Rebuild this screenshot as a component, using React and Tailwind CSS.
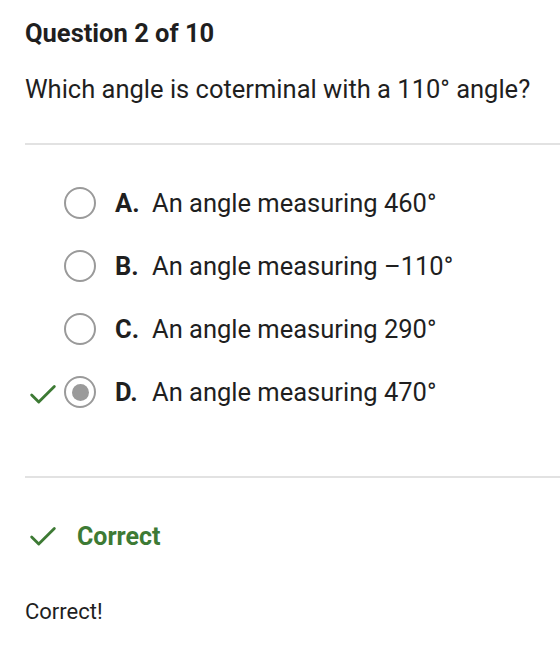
import { Check } from 'lucide-react';

const options = [
  { letter: 'A.', text: 'An angle measuring 460°' },
  { letter: 'B.', text: 'An angle measuring –110°' },
  { letter: 'C.', text: 'An angle measuring 290°' },
  { letter: 'D.', text: 'An angle measuring 470°', selected: true },
];

const Radio = ({ selected }) => (
  <div className="w-[32px] h-[32px] rounded-full border-2 border-[#9a9a9a] flex items-center justify-center bg-white">
    {selected && <div className="w-[17px] h-[17px] rounded-full bg-[#9a9a9a]" />}
  </div>
);

export default function App() {
  return (
    <div className="w-[560px] h-[650px] bg-white text-[#1f1f1f] font-['Roboto',sans-serif] overflow-hidden">
      {/* Question header */}
      <div className="pl-[25px] pt-[17px]">
        <h1 className="text-[25.5px] font-bold leading-[32px]">Question 2 of 10</h1>
        <p className="text-[25.5px] leading-[32px] mt-[24px]">Which angle is coterminal with a 110° angle?</p>
      </div>
      <div className="ml-[25px] mt-[38px] h-[2px] bg-[#e2e2e2]" />

      {/* Options */}
      <div className="flex flex-col gap-[31px] mt-[42px]">
        {options.map((o) => (
          <div key={o.letter} className="flex items-center h-[32px]">
            <div className="w-[64px] flex justify-end pr-[4px]">
              {o.selected && <Check size={34} strokeWidth={2} className="text-[#3d7a34] mt-[6px]" />}
            </div>
            <Radio selected={o.selected} />
            <span className="ml-[19px] text-[25.5px] font-bold w-[37px]">{o.letter}</span>
            <span className="text-[25.5px]">{o.text}</span>
          </div>
        ))}
      </div>

      <div className="ml-[25px] mt-[68px] h-[2px] bg-[#e2e2e2]" />

      {/* Feedback */}
      <div className="flex items-center pl-[26px] mt-[43px] h-[32px]">
        <Check size={34} strokeWidth={2} className="text-[#3d7a34]" />
        <span className="ml-[17px] text-[25px] font-bold text-[#3d7a34]">Correct</span>
      </div>
      <p className="pl-[25px] mt-[42px] text-[22px]">Correct!</p>
    </div>
  );
}
